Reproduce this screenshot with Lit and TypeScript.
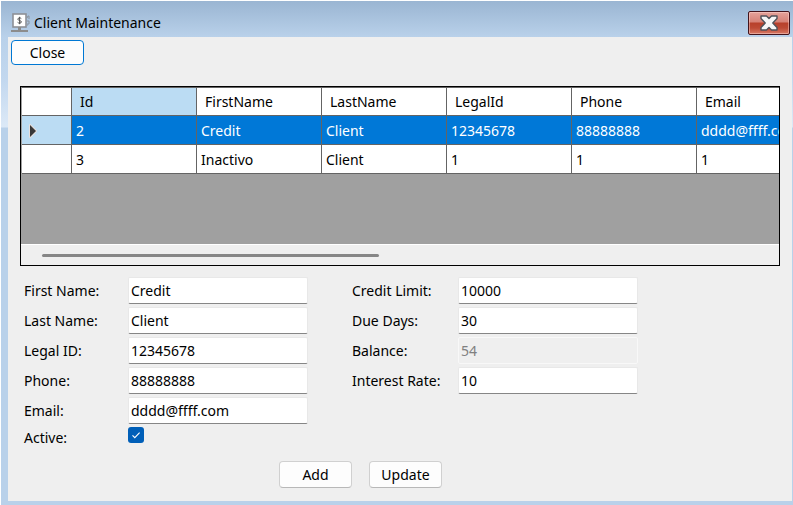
import { LitElement, html, css } from "lit";
import { customElement, state } from "lit/decorators.js";

interface Client {
  id: number;
  firstName: string;
  lastName: string;
  legalId: string;
  phone: string;
  email: string;
}

interface Field {
  id: string;
  label: string;
  value: string;
  disabled?: boolean;
}

const COLUMNS = ["Id", "FirstName", "LastName", "LegalId", "Phone", "Email"];

const CLIENTS: Client[] = [
  { id: 2, firstName: "Credit", lastName: "Client", legalId: "12345678", phone: "88888888", email: "dddd@ffff.com" },
  { id: 3, firstName: "Inactivo", lastName: "Client", legalId: "1", phone: "1", email: "1" },
];

const PERSONAL: Field[] = [
  { id: "first-name", label: "First Name:", value: "Credit" },
  { id: "last-name", label: "Last Name:", value: "Client" },
  { id: "legal-id", label: "Legal ID:", value: "12345678" },
  { id: "phone", label: "Phone:", value: "88888888" },
  { id: "email", label: "Email:", value: "dddd@ffff.com" },
];

const CREDIT: Field[] = [
  { id: "credit-limit", label: "Credit Limit:", value: "10000" },
  { id: "due-days", label: "Due Days:", value: "30" },
  { id: "balance", label: "Balance:", value: "54", disabled: true },
  { id: "interest-rate", label: "Interest Rate:", value: "10" },
];

@customElement("client-grid")
export class ClientGrid extends LitElement {
  @state() private selected = 2;

  static styles = css`
    :host {
      display: block;
      border: 1px solid #000;
      background: #a0a0a0;
    }
    .viewport {
      height: 157px;
      overflow: hidden;
    }
    table {
      width: 801px;
      table-layout: fixed;
      border-collapse: separate;
      border-spacing: 0;
      border-top: 1px solid #646464;
      border-left: 1px solid #a0a0a0;
      background: #fff;
    }
    .marker-col {
      width: 50px;
    }
    .data-col {
      width: 125px;
    }
    th,
    td {
      box-sizing: border-box;
      height: 29px;
      padding: 2px 4px 0;
      border-right: 1px solid #646464;
      border-bottom: 1px solid #646464;
      font-weight: 400;
      line-height: 20px;
      text-align: left;
      white-space: nowrap;
    }
    thead th {
      height: 28px;
      padding: 0 8px;
    }
    .current {
      background: #bbdcf3;
    }
    .selected td {
      background: #0078d7;
      color: #fff;
    }
    .arrow {
      display: block;
      margin-left: 2px;
    }
    .scrollbar {
      display: flex;
      align-items: center;
      height: 21px;
      border-top: 1px solid #fff;
      background: #efefef;
      padding: 0 21px;
      box-sizing: border-box;
    }
    .thumb {
      width: 47%;
      height: 3px;
      border-radius: 2px;
      background: #868686;
    }
  `;

  render() {
    return html`
      <div class="viewport">
        <table>
          <colgroup>
            <col class="marker-col" />
            ${COLUMNS.map(() => html`<col class="data-col" />`)}
          </colgroup>
          <thead>
            <tr>
              <th></th>
              ${COLUMNS.map((c, i) => html`<th scope="col" class=${i === 0 ? "current" : ""}>${c}</th>`)}
            </tr>
          </thead>
          <tbody>
            ${CLIENTS.map((c) => {
              const on = c.id === this.selected;
              return html`<tr class=${on ? "selected" : ""} @click=${() => (this.selected = c.id)}>
                <th scope="row" class=${on ? "current" : ""}>
                  ${on
                    ? html`<svg class="arrow" width="10" height="16" viewBox="0 0 10 16" aria-hidden="true">
                        <path d="M2 2L8 8L2 14Z" fill="none" stroke="#e6dedb" stroke-width="2" stroke-linejoin="round" />
                        <path d="M2 2L8 8L2 14Z" fill="#383838" />
                      </svg>`
                    : ""}
                </th>
                <td>${c.id}</td>
                <td>${c.firstName}</td>
                <td>${c.lastName}</td>
                <td>${c.legalId}</td>
                <td>${c.phone}</td>
                <td>${c.email}</td>
              </tr>`;
            })}
          </tbody>
        </table>
      </div>
      <div class="scrollbar"><div class="thumb"></div></div>
    `;
  }
}

@customElement("app-root")
export class AppRoot extends LitElement {
  static styles = css`
    :host {
      display: flex;
      flex-direction: column;
      box-sizing: border-box;
      min-height: 100vh;
      padding: 0 1px 4px 7px;
      border-top: 1px solid #fff;
      border-left: 1px solid #fff;
      background: linear-gradient(#9ab5d2 0, #b9d1ea 36px, #c3d8ef 80px, #dce9f7 126px, #b9d1ea 127px);
      color: #000;
      font: 14px/20px "Noto Sans", "Open Sans", sans-serif;
    }
    .titlebar {
      display: flex;
      align-items: center;
      height: 36px;
      padding: 0 2px 0 3px;
    }
    .title {
      flex: 1;
      margin: 0 0 0 3px;
      padding-top: 7px;
      font: inherit;
    }
    .app-icon {
      padding-top: 7px;
    }
    .shut {
      display: flex;
      align-items: center;
      justify-content: center;
      width: 42px;
      height: 24px;
      margin-top: 7px;
      padding: 0;
      border: 1px solid #43141c;
      border-radius: 2px;
      background: linear-gradient(#e5a39b 0, #d68176 10px, #b8402b 11px, #bd4a35 16px, #d87a66 22px);
      box-shadow: inset 0 0 0 1px rgba(255, 220, 215, 0.45);
    }
    main {
      flex: 1;
      padding: 3px;
      background: #efefef;
    }
    .button {
      display: block;
      box-sizing: border-box;
      width: 73px;
      height: 27px;
      padding: 0;
      border: 1px solid #d0d0d0;
      border-bottom-color: #b8b8b8;
      border-radius: 4px;
      background: #fdfdfd;
      color: inherit;
      font: inherit;
    }
    .button.focused {
      height: 25px;
      border-color: #0078d4;
    }
    client-grid {
      margin: 21px 9px 0;
    }
    .form {
      display: grid;
      grid-template-columns: 284px 286px;
      column-gap: 44px;
      align-items: start;
      margin: 11px 13px 0;
    }
    .fields {
      display: grid;
      row-gap: 3px;
    }
    .field {
      display: flex;
      align-items: center;
      justify-content: space-between;
    }
    .field input[type="text"] {
      box-sizing: border-box;
      width: 180px;
      height: 27px;
      padding: 0 2px;
      border: 1px solid #e8e8e8;
      border-bottom-color: #868686;
      border-radius: 2px;
      background: #fff;
      color: #000;
      font: inherit;
    }
    .field input[type="text"]:disabled {
      border-color: #f8f8f8;
      background: #efefef;
      color: #808080;
    }
    .check {
      display: flex;
      align-items: flex-start;
    }
    .check label {
      width: 104px;
      padding-top: 1px;
    }
    .check input {
      appearance: none;
      width: 16px;
      height: 16px;
      margin: 0;
      border-radius: 3px;
      background: #005fb8;
    }
    .mark-box {
      display: grid;
    }
    .mark-box > * {
      grid-area: 1 / 1;
    }
    .mark {
      pointer-events: none;
    }
    .actions {
      display: flex;
      gap: 17px;
      margin: 13px 0 0 268px;
    }
  `;

  private renderField(f: Field) {
    return html`<div class="field">
      <label for=${f.id}>${f.label}</label>
      <input type="text" id=${f.id} .value=${f.value} ?disabled=${f.disabled ?? false} />
    </div>`;
  }

  render() {
    return html`
      <header class="titlebar">
        <svg class="app-icon" width="20" height="20" viewBox="0 0 20 20" aria-hidden="true">
          <rect x="2" y="1" width="13" height="13" fill="#fff" stroke="#8e9096" stroke-width="1.6" />
          <path d="M7 14h3v3H7zM0 17h17v2H0z" fill="#8c8c8c" />
          <path d="M16 5l1-2h1v3M16 8h2v3h-2M16 12h1" fill="none" stroke="#8a929c" />
          <path d="M10.3 5.6C9.5 4.6 6.8 4.7 6.8 6.2c0 1.6 3.6 1 3.600 2.700 0 1.600-2.900 1.600-3.800.4M8.600 3.800v7.400" fill="none" stroke="#555" />
        </svg>
        <h1 class="title">Client Maintenance</h1>
        <button class="shut" aria-label="Close window">
          <svg width="18" height="16" viewBox="0 0 18 16" aria-hidden="true">
            <path d="M1 1h5.500l2.500 2.500L11.500 1H17v2.500L12.800 8l4.200 4.500V15h-5.500L9 12.500 6.500 15H1v-2.500L5.200 8 1 3.500z" fill="#f8f8f8" stroke="#50525a" stroke-width="1.400" stroke-linejoin="round" />
          </svg>
        </button>
      </header>
      <main>
        <button class="button focused">Close</button>
        <client-grid></client-grid>
        <form class="form" @submit=${(e: Event) => e.preventDefault()}>
          <div class="fields">
            ${PERSONAL.map((f) => this.renderField(f))}
            <div class="check">
              <label for="active">Active:</label>
              <span class="mark-box">
                <input type="checkbox" id="active" checked />
                <svg class="mark" width="16" height="16" viewBox="0 0 16 16" aria-hidden="true">
                  <path d="M4.500 8.300l2.300 2.300 4.800-4.900" fill="none" stroke="#fff" stroke-width="1.100" />
                </svg>
              </span>
            </div>
          </div>
          <div class="fields">${CREDIT.map((f) => this.renderField(f))}</div>
        </form>
        <div class="actions">
          <button class="button">Add</button>
          <button class="button">Update</button>
        </div>
      </main>
    `;
  }
}
